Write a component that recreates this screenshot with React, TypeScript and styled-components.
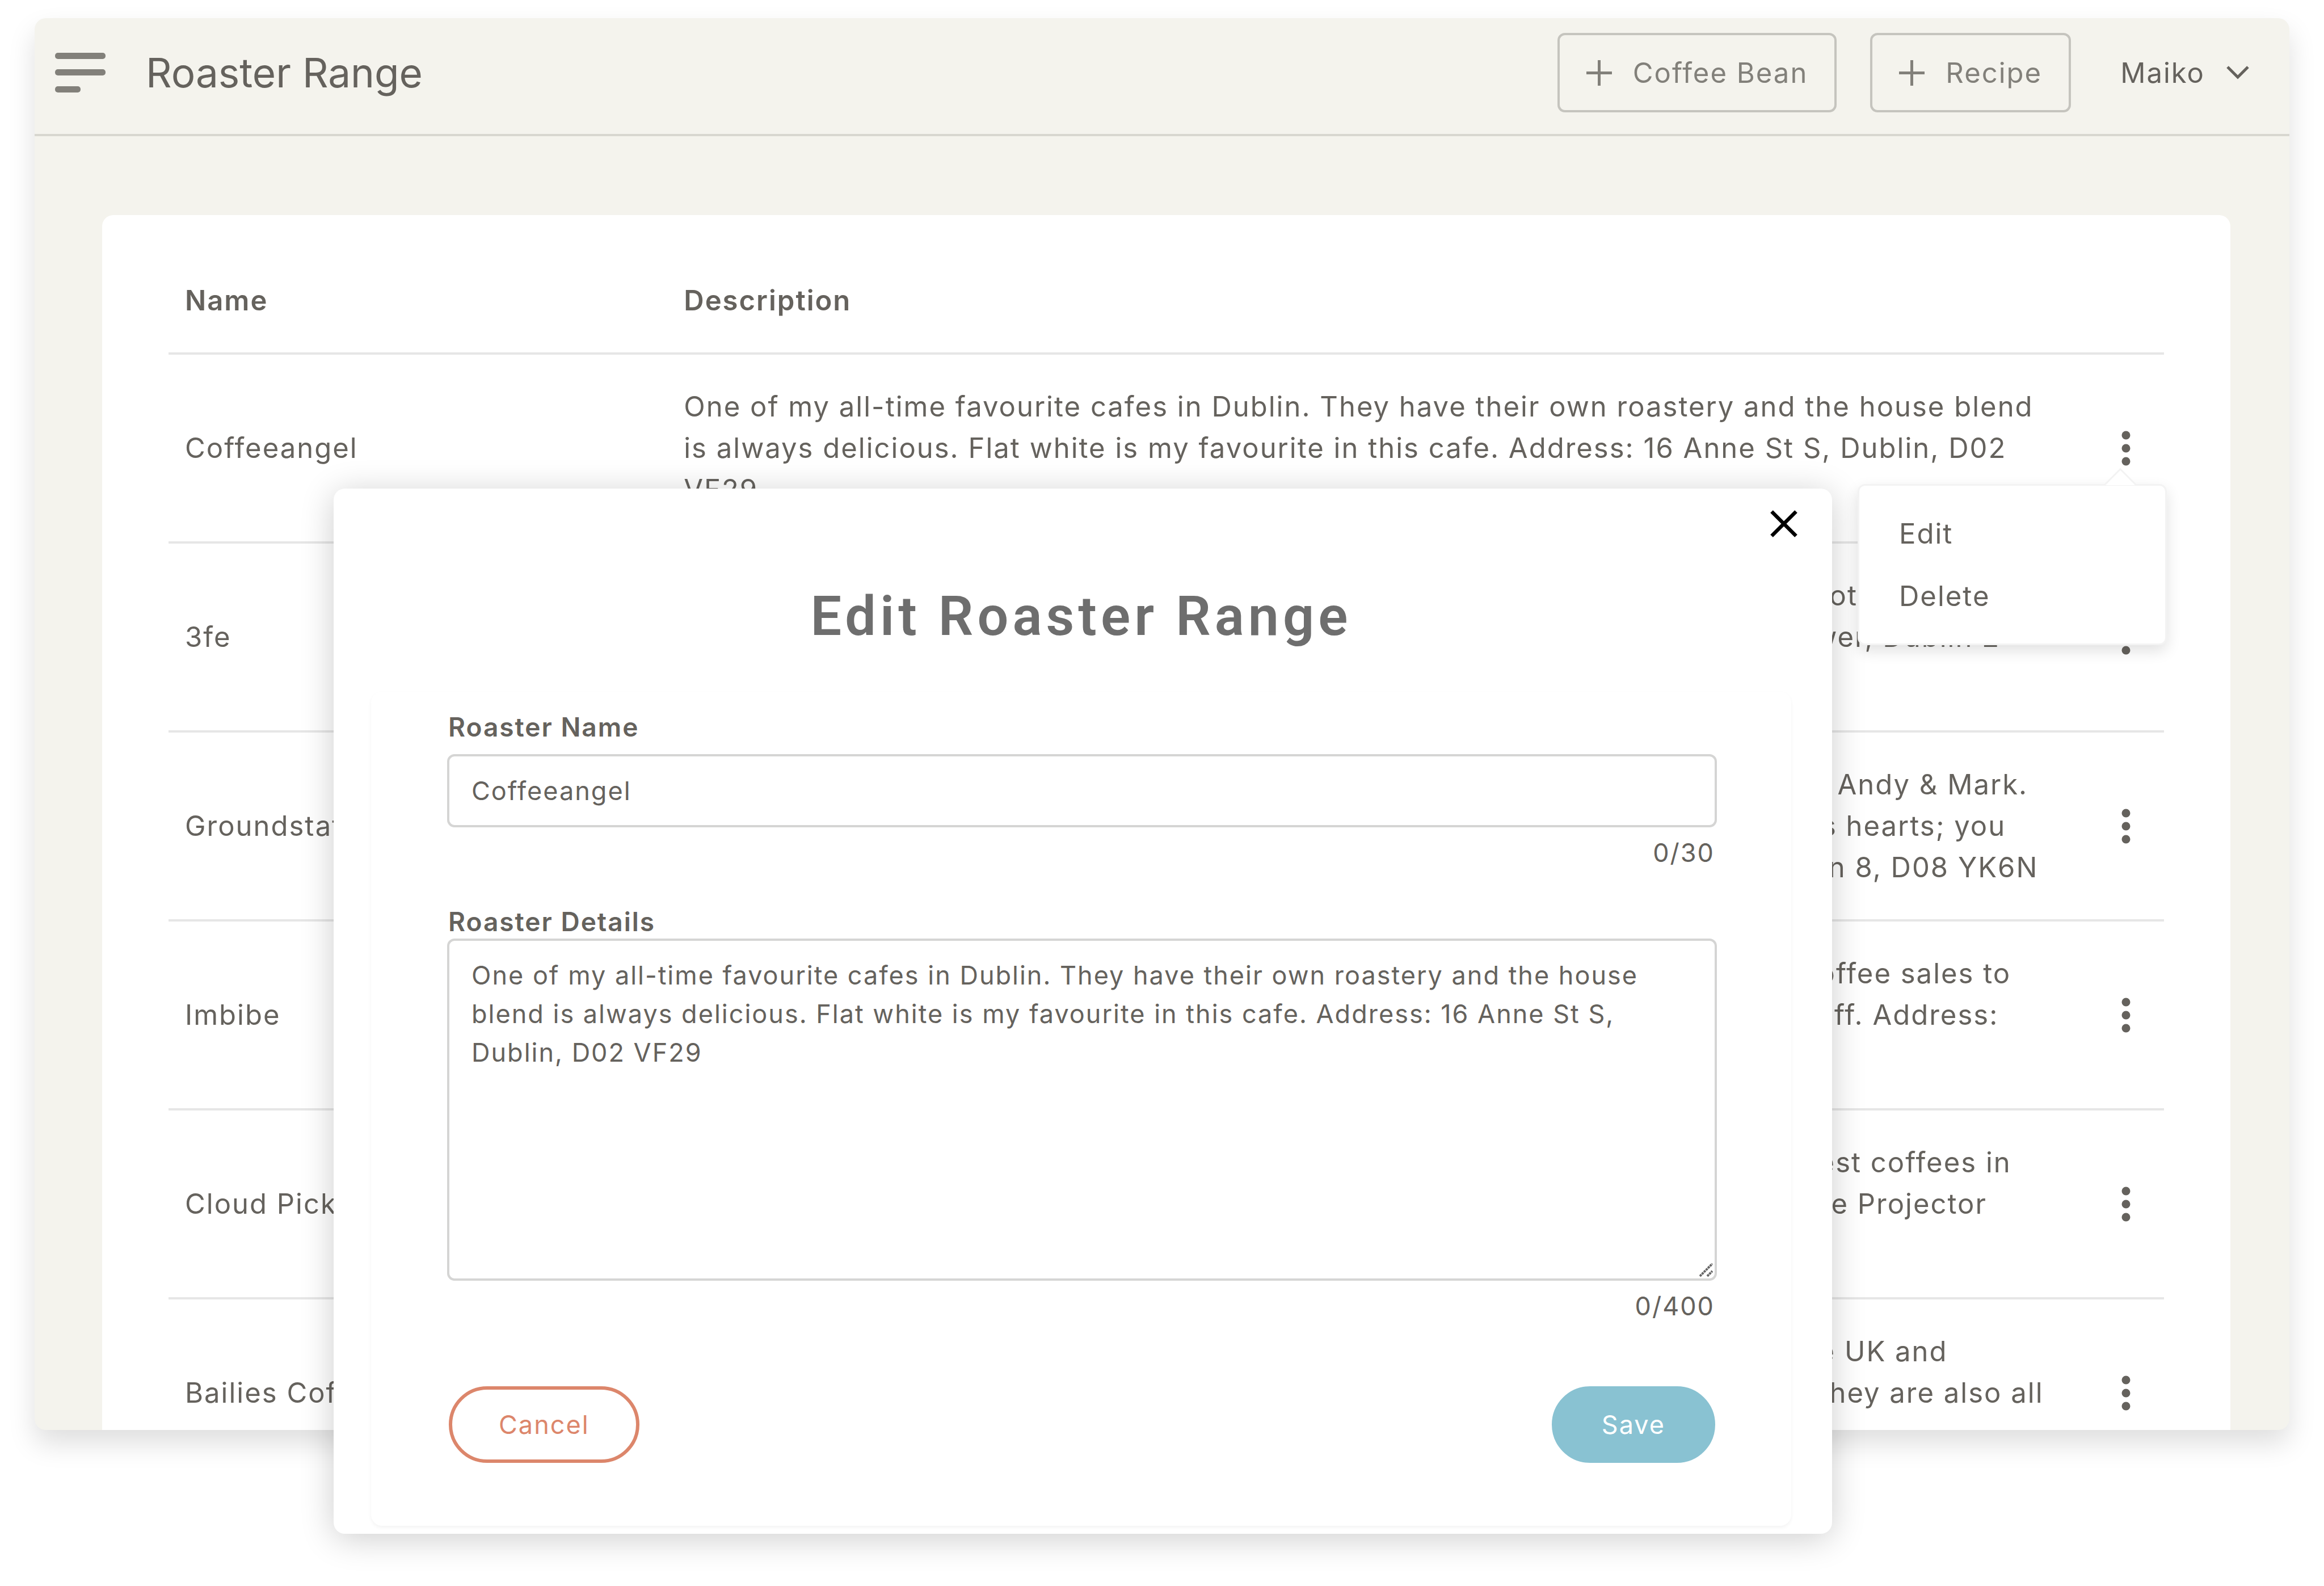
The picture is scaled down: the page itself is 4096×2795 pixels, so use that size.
import React from "react";
import styled, { createGlobalStyle, css } from "styled-components";

const color = {
  text: "#65625d",
  muted: "#82807a",
  page: "#f4f3ed",
  line: "#d8d7d0",
  rowLine: "#e6e6e6",
  field: "#d5d5d4",
  orange: "#dc866b",
  blue: "#89c2d2",
};

const GlobalStyle = createGlobalStyle`
  *, *::before, *::after { box-sizing: border-box; }
  body { margin: 0; background: #fff; }
  body, button, input, textarea {
    font-family: Inter, "Liberation Sans", sans-serif;
    letter-spacing: 2px;
    color: ${color.text};
  }
  button { margin: 0; padding: 0; border: 0; background: none; cursor: pointer; }
  svg { display: block; flex: none; }
`;

const Page = styled.div`
  position: relative;
  min-height: 100vh;
  padding: 32px 61px;
  font-size: 49px;
  line-height: 73px;
`;

const Window = styled.div`
  height: 89vh;
  overflow: hidden;
  border-radius: 20px;
  background: ${color.page};
  box-shadow: 0 24px 48px rgba(0, 0, 0, 0.13);
`;

const Header = styled.header`
  display: flex;
  align-items: center;
  height: 208px;
  padding: 0 71px 12px 36px;
  border-bottom: 4px solid ${color.line};
`;

const PageTitle = styled.h1`
  flex: 1;
  margin: 0 0 0 71px;
  font-size: 71px;
  font-weight: 400;
  line-height: 88px;
  letter-spacing: normal;
`;

const HeaderActions = styled.div`
  display: flex;
  align-items: center;
  gap: 59px;
`;

const AddButton = styled.button`
  display: flex;
  align-items: center;
  gap: 37px;
  height: 140px;
  padding: 0 47px;
  border: 4px solid #c5c4be;
  border-radius: 13px;
  font-size: 49px;
  color: ${color.muted};
`;

const UserButton = styled.button`
  display: flex;
  align-items: center;
  gap: 38px;
  margin-left: 28px;
  font-size: 49px;
`;

const Card = styled.main`
  margin: 139px 104px 0 119px;
  padding: 59px 117px 0;
  border-radius: 20px;
  background: #fff;
`;

const Table = styled.table`
  width: 100%;
  table-layout: fixed;
  border-collapse: separate;
  border-spacing: 0;
  text-align: left;
`;

const cell = css`
  padding: 55px 29px;
  border-bottom: 4px solid ${color.rowLine};
`;

const HeadCell = styled.th<{ $width?: string }>`
  ${cell}
  width: ${(p) => p.$width ?? "auto"};
  font-weight: 600;
`;

const Cell = styled.td`
  ${cell}
  white-space: pre-line;
`;

const ActionCell = styled.td`
  ${cell}
  padding: 0;
`;

const ActionAnchor = styled.div`
  position: relative;
  width: 60px;
  margin: 0 auto;
`;

const DotsButton = styled.button`
  display: flex;
  align-items: center;
  justify-content: center;
  width: 60px;
  height: 73px;
`;

const Menu = styled.ul`
  position: absolute;
  z-index: 2;
  top: 100px;
  right: -42px;
  width: 545px;
  margin: 0;
  padding: 29px 0;
  list-style: none;
  border: 3px solid #f3f3f3;
  border-radius: 13px;
  background: #fff;
  box-shadow: 0 10px 26px rgba(0, 0, 0, 0.12);

  &::before {
    content: "";
    position: absolute;
    top: -23px;
    right: 59px;
    width: 40px;
    height: 40px;
    border: solid #f3f3f3;
    border-width: 3px 0 0 3px;
    background: linear-gradient(135deg, #fff 50%, transparent 50%);
    transform: rotate(45deg);
  }
`;

const MenuItem = styled.button`
  display: block;
  width: 100%;
  height: 110px;
  padding: 0 70px;
  font-size: 49px;
  text-align: left;
`;

const Overlay = styled.div`
  position: absolute;
  z-index: 1;
  inset: 0;
  display: flex;
  align-items: flex-start;
  padding: 861px 867px 0 588px;
`;

const Dialog = styled.section`
  position: relative;
  flex: 1;
  padding: 165px 72px 14px 66px;
  border-radius: 20px;
  background: #fff;
  box-shadow: 0 8px 60px rgba(0, 0, 0, 0.2);
`;

const CloseButton = styled.button`
  position: absolute;
  top: 38px;
  right: 61px;
`;

const DialogTitle = styled.h2`
  margin: 0;
  font-family: Roboto, "Liberation Sans", sans-serif;
  font-size: 97px;
  font-weight: 600;
  line-height: 120px;
  letter-spacing: 7px;
  text-align: center;
  color: #6e6e6e;
`;

const Form = styled.form`
  margin-top: 73px;
  padding: 32px 131px 111px 134px;
  border-radius: 20px;
  box-shadow: 0 3px 6px rgba(0, 0, 0, 0.05);
  font-size: 45px;
  line-height: 68px;
`;

const Field = styled.div<{ $gap?: number }>`
  display: grid;
  row-gap: ${(p) => p.$gap ?? 0}px;
`;

const Label = styled.label`
  padding-left: 2px;
  font-size: 46px;
  font-weight: 600;
  line-height: 60px;
`;

const field = css`
  display: block;
  width: 100%;
  margin: 0;
  border: 4px solid ${color.field};
  border-radius: 13px;
  background: #fff;
  font-size: 45px;
  line-height: 68px;
  outline: none;
`;

const Input = styled.input`
  ${field}
  height: 129px;
  padding: 0 39px;
`;

const TextAreaBox = styled.div`
  position: relative;
`;

const TextArea = styled.textarea`
  ${field}
  height: 603px;
  padding: 27px 39px;
  resize: none;
`;

const Grip = styled.svg`
  position: absolute;
  right: 7px;
  bottom: 7px;
`;

const Count = styled.div<{ $after: number }>`
  margin: 11px 0 ${(p) => p.$after}px;
  padding-right: 4px;
  text-align: right;
`;

const FormActions = styled.div`
  display: flex;
  justify-content: space-between;
  padding: 0 3px;
`;

const PillButton = styled.button<{ $filled?: boolean }>`
  height: 135px;
  padding: 0 82px;
  border: 6px solid ${(p) => (p.$filled ? color.blue : color.orange)};
  border-radius: 68px;
  background: ${(p) => (p.$filled ? color.blue : "#fff")};
  font-size: 45px;
  color: ${(p) => (p.$filled ? "#fff" : color.orange)};
`;

const HamburgerIcon = () => (
  <svg width="89" height="70" viewBox="0 0 89 70" fill={color.muted}>
    <rect width="89" height="11" rx="5" y="0" />
    <rect width="89" height="11" rx="5" y="29" />
    <rect width="45" height="11" rx="5" y="59" />
  </svg>
);

const PlusIcon = () => (
  <svg width="45" height="45" viewBox="0 0 45 45" stroke="currentColor" strokeWidth="5">
    <path d="M22.5 0v45M0 22.5h45" />
  </svg>
);

const ChevronIcon = () => (
  <svg width="40" height="24" viewBox="0 0 40 24" fill="none" stroke="currentColor" strokeWidth="5">
    <path d="M2 2l18 18L38 2" />
  </svg>
);

const DotsIcon = () => (
  <svg width="16" height="62" viewBox="0 0 16 62" fill="currentColor">
    <circle cx="8" cy="8" r="7.5" />
    <circle cx="8" cy="31" r="7.5" />
    <circle cx="8" cy="54" r="7.5" />
  </svg>
);

const CloseIcon = () => (
  <svg width="48" height="48" viewBox="0 0 48 48" stroke="#000" strokeWidth="6.5">
    <path d="M2.5 2.5l43 43M45.5 2.5l-43 43" />
  </svg>
);

const roasters = [
  {
    name: "Coffeeangel",
    description:
      "One of my all-time favourite cafes in Dublin. They have their own roastery and the house blend\nis always delicious. Flat white is my favourite in this cafe. Address: 16 Anne St S, Dublin, D02\nVF29",
  },
  {
    name: "3fe",
    description:
      "Third Floor Espresso always serves the best coffee in the whole city but this is not\nonly about espresso, filter brew is good too. Address: 32 Grand Canal Street Lower, Dublin 2\nD02 A342",
  },
  {
    name: "Groundstate",
    description:
      "speciality coffee roastery in very small batches here in old Dublin by two friends Andy & Mark.\nGood coffee and good people are the things that are always closest to all owners hearts; you\ncan always taste in each single cup they serve. Address: 6 Lower Basin St, Dublin 8, D08 YK6N",
  },
  {
    name: "Imbibe",
    description:
      "A very small Irish speciality coffee roaster which donates ten percent of all its coffee sales to\nlocal charities, takes really good care of all the lovely farmers and also of the staff. Address:\nUnit 3, Francis Street, Dublin 8",
  },
  {
    name: "Cloud Picker",
    description:
      "A friendly little roastery and cafe in the Dublin docklands selling some of the finest coffees in\nthe whole lovely city. Our own favourite here are always the beans roasted for the Projector\nblend. Address: 42 Pearse St, Dublin 2",
  },
  {
    name: "Bailies Coffee",
    description:
      "One multi award winning family roaster from Belfast, very well known all over the UK and\nIreland for the great work that they always do directly with the coffee growers. They are also all\nlovely people.",
  },
];

export default function App() {
  return (
    <Page>
      <GlobalStyle />
      <Window>
        <Header>
          <button type="button" aria-label="Toggle navigation">
            <HamburgerIcon />
          </button>
          <PageTitle>Roaster Range</PageTitle>
          <HeaderActions>
            <AddButton type="button">
              <PlusIcon />
              Coffee Bean
            </AddButton>
            <AddButton type="button">
              <PlusIcon />
              Recipe
            </AddButton>
            <UserButton type="button">
              Maiko
              <ChevronIcon />
            </UserButton>
          </HeaderActions>
        </Header>
        <Card>
          <Table>
            <thead>
              <tr>
                <HeadCell $width="25%">Name</HeadCell>
                <HeadCell>Description</HeadCell>
                <HeadCell $width="134px" aria-label="Actions" />
              </tr>
            </thead>
            <tbody>
              {roasters.map((r, i) => (
                <tr key={r.name}>
                  <Cell>{r.name}</Cell>
                  <Cell>{r.description}</Cell>
                  <ActionCell>
                    <ActionAnchor>
                      <DotsButton type="button" aria-label={`Actions for ${r.name}`}>
                        <DotsIcon />
                      </DotsButton>
                      {i === 0 && (
                        <Menu>
                          <li>
                            <MenuItem type="button">Edit</MenuItem>
                          </li>
                          <li>
                            <MenuItem type="button">Delete</MenuItem>
                          </li>
                        </Menu>
                      )}
                    </ActionAnchor>
                  </ActionCell>
                </tr>
              ))}
            </tbody>
          </Table>
        </Card>
      </Window>

      <Overlay>
        <Dialog role="dialog" aria-labelledby="dialog-title">
          <CloseButton type="button" aria-label="Close">
            <CloseIcon />
          </CloseButton>
          <DialogTitle id="dialog-title">Edit Roaster Range</DialogTitle>
          <Form>
            <Field $gap={18}>
              <Label htmlFor="roaster-name">Roaster Name</Label>
              <Input id="roaster-name" defaultValue="Coffeeangel" />
            </Field>
            <Count $after={57}>0/30</Count>
            <Field>
              <Label htmlFor="roaster-details">Roaster Details</Label>
              <TextAreaBox>
                <TextArea
                  id="roaster-details"
                  spellCheck={false}
                  defaultValue="One of my all-time favourite cafes in Dublin. They have their own roastery and the house blend is always delicious. Flat white is my favourite in this cafe. Address: 16 Anne St S, Dublin, D02 VF29"
                />
                <Grip width="24" height="24" viewBox="0 0 24 24" stroke="#666" strokeWidth="4" strokeDasharray="4 1">
                  <path d="M1 23L23 1M14 23l9-9" />
                </Grip>
              </TextAreaBox>
            </Field>
            <Count $after={107}>0/400</Count>
            <FormActions>
              <PillButton type="button">Cancel</PillButton>
              <PillButton type="submit" $filled>
                Save
              </PillButton>
            </FormActions>
          </Form>
        </Dialog>
      </Overlay>
    </Page>
  );
}
